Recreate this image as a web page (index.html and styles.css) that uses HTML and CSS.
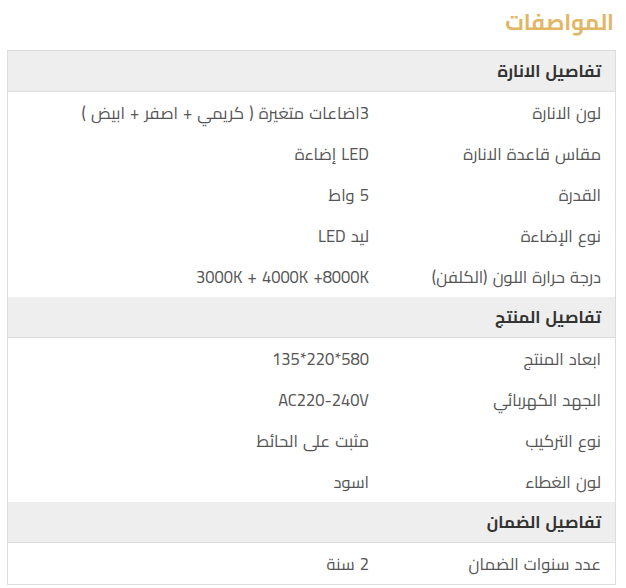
FILE: index.html
```html
<!DOCTYPE html>
<html lang="ar" dir="rtl">
<head>
<meta charset="utf-8">
<link rel="stylesheet" href="styles.css">
</head>
<body>
<h2 class="title">المواصفات</h2>
<div class="specs">
  <div class="sec">تفاصيل الانارة</div>
  <div class="row"><div class="k">لون الانارة</div><div class="v">3اضاعات متغيرة ( كريمي + اصفر + ابيض )</div></div>
  <div class="row"><div class="k">مقاس قاعدة الانارة</div><div class="v">LED إضاءة</div></div>
  <div class="row"><div class="k">القدرة</div><div class="v">5 واط</div></div>
  <div class="row"><div class="k">نوع الإضاءة</div><div class="v">ليد LED</div></div>
  <div class="row"><div class="k">درجة حرارة اللون (الكلفن)</div><div class="v" dir="ltr">3000K + 4000K +8000K</div></div>
  <div class="sec">تفاصيل المنتج</div>
  <div class="row"><div class="k">ابعاد المنتج</div><div class="v">580*220*135</div></div>
  <div class="row"><div class="k">الجهد الكهربائي</div><div class="v">AC220-240V</div></div>
  <div class="row"><div class="k">نوع التركيب</div><div class="v">مثبت على الحائط</div></div>
  <div class="row"><div class="k">لون الغطاء</div><div class="v">اسود</div></div>
  <div class="sec">تفاصيل الضمان</div>
  <div class="row"><div class="k">عدد سنوات الضمان</div><div class="v">2 سنة</div></div>
</div>
</body>
</html>
```
FILE: styles.css
```css
html, body {
  margin: 0;
  padding: 0;
  background: #fff;
}
body {
  font-family: "Cairo", monospace;
  color: #555;
  padding: 0 10px 0 7px;
}
.title {
  margin: 0;
  height: 50px;
  line-height: 44px;
  font-size: 22px;
  font-weight: 700;
  color: #e2b664;
  padding-right: 2px;
}
.specs {
  border: 1px solid #dddddd;
}
.sec {
  height: 40px;
  line-height: 40px;
  background: #eeeeee;
  border-bottom: 1px solid #dddddd;
  padding-right: 14px;
  font-size: 16.5px;
  word-spacing: 1.5px;
  font-weight: 700;
  color: #333;
}
.row {
  display: flex;
  height: 41px;
  align-items: center;
  font-size: 16.5px;
  word-spacing: 1.5px;
}
.k {
  width: 231px;
  padding-right: 14px;
  box-sizing: border-box;
  flex: none;
}
.v {
  padding-right: 15px;
}
```
